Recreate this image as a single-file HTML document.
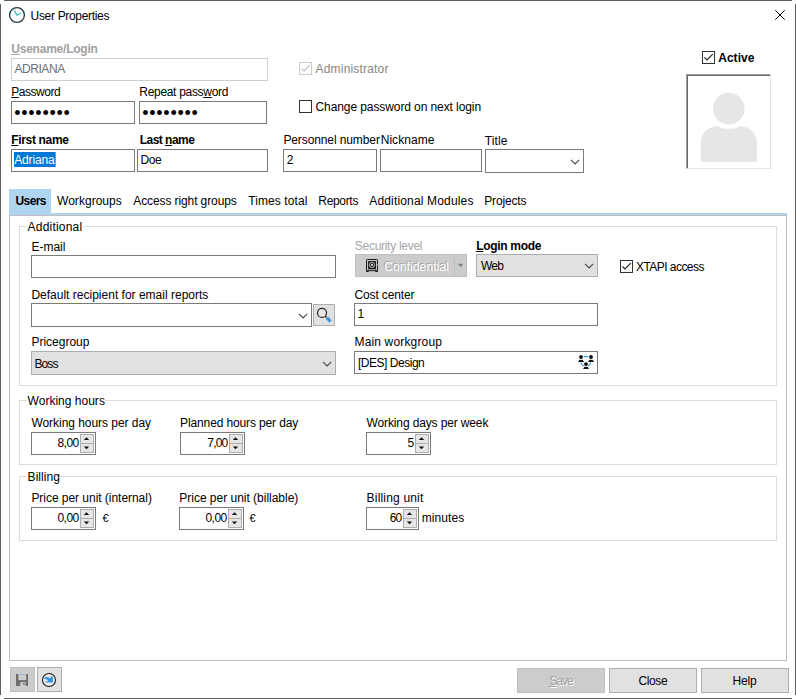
<!DOCTYPE html>
<html lang="en">
<head>
<meta charset="utf-8">
<title>User Properties</title>
<style>
html,body{margin:0;padding:0;background:#fff}
body{width:796px;height:699px;overflow:hidden}
#win{position:relative;width:796px;height:699px;background:#fff;overflow:hidden;font-family:"Liberation Sans",sans-serif;font-size:12px;line-height:14px;color:#000}
#win div,#win svg{position:absolute;box-sizing:border-box}
.t{white-space:nowrap;height:14px}
.b{font-weight:bold}
.t u{text-decoration:underline;text-underline-offset:1px;text-decoration-thickness:1px}
.ln{background:#5e5e5e}
.f{border:1px solid #7a7a7a;background:#fff}
.fd{border:1px solid #cfcfcf;background:#fff}
.cb{border:1px solid #e1e1e1;background:#e1e1e1;outline:0}
.btn{border:1px solid #adadad;background:#e1e1e1}
.gb{border:1px solid #dcdcdc}
.lg{background:#fff}
.ck{border:1px solid #333;background:#fff;width:13px;height:13px}
.sp{border:1px solid #adadad;background:#e6e6e6;width:14px}
.pw{font-size:18px;line-height:14px;height:14px;white-space:nowrap;letter-spacing:0.76px}

</style>
</head>
<body>
<div id="win">
<!-- window frame -->
<div class="ln" style="left:4px;top:0;width:788px;height:1px"></div>
<div class="ln" style="left:4px;top:698px;width:788px;height:1px"></div>
<div class="ln" style="left:0;top:4px;width:1px;height:691px"></div>
<div class="ln" style="left:795px;top:4px;width:1px;height:691px"></div>
<!-- title icon -->
<svg style="left:8px;top:6px" width="18" height="18" viewBox="0 0 18 18"><circle cx="9" cy="9" r="7.4" fill="#fff" stroke="#1f3842" stroke-width="1.3"/><path d="M6.4 4.6 L8.9 9.1 L12.3 7.3" fill="none" stroke="#4bbcbc" stroke-width="1.4" stroke-linecap="round" stroke-linejoin="round"/></svg>
<svg style="left:774px;top:9px" width="13" height="13" viewBox="0 0 13 13"><path d="M1.3 1.3 L10.7 10.7 M10.7 1.3 L1.3 10.7" stroke="#000" stroke-width="1" fill="none"/></svg>

<!-- top form -->
<div class="fd" style="left:11px;top:58px;width:257px;height:23px"></div>
<div class="f" style="left:11px;top:101px;width:124px;height:23px"></div>
<div class="f" style="left:139px;top:101px;width:128px;height:23px"></div>
<div class="t pw" style="left:14.2px;top:106px">••••••••</div>
<div class="t pw" style="left:142.2px;top:106px">••••••••</div>
<div class="f" style="left:11px;top:149px;width:124px;height:23px"></div>
<div style="left:14px;top:152px;width:41px;height:15px;background:#0078d7"></div>
<div style="left:55px;top:152px;width:1px;height:15px;background:#f0822c"></div>
<div class="f" style="left:137px;top:149px;width:131px;height:23px"></div>
<div class="f" style="left:283px;top:149px;width:94px;height:23px"></div>
<div class="f" style="left:380px;top:149px;width:102px;height:23px"></div>
<div class="f" style="left:485px;top:149px;width:99px;height:24px"></div>
<svg style="left:570px;top:158px" width="11" height="8" viewBox="0 0 11 8"><path d="M1 1.8 L5.1 5.9 L9.2 1.8" fill="none" stroke="#444" stroke-width="1.1"/></svg>
<!-- checkboxes top -->
<div class="ck" style="left:299px;top:62px;border-color:#cccccc"></div>
<svg style="left:299px;top:62px" width="13" height="13" viewBox="0 0 13 13"><path d="M2.4 6.4 L5 9 L10.8 3.2" fill="none" stroke="#c0c0c0" stroke-width="1.2"/></svg>
<div class="ck" style="left:299px;top:100px"></div>
<div class="ck" style="left:702px;top:51px"></div>
<svg style="left:702px;top:51px" width="13" height="13" viewBox="0 0 13 13"><path d="M2.4 6.4 L5 9 L10.8 3.2" fill="none" stroke="#222" stroke-width="1.2"/></svg>
<!-- photo -->
<div style="left:686px;top:74px;width:85px;height:95px;background:#fff;border-top:1px solid #a0a0a0;border-left:1px solid #a0a0a0;border-right:1px solid #e3e3e3;border-bottom:1px solid #e3e3e3;box-shadow:inset 1px 1px 0 #696969"></div>
<svg style="left:688px;top:76px" width="82" height="92" viewBox="0 0 82 92"><circle cx="40.8" cy="32.6" r="15.8" fill="#e6e6e6"/><path d="M12.8 86 V68 C12.8 55 22 50.2 30 50.2 C34 53.6 47.6 53.6 51.6 50.2 C59.6 50.2 69 55 69 68 V86 Z" fill="#e6e6e6"/></svg>

<!-- tabs -->
<div style="left:9px;top:189px;width:42px;height:26px;background:#b0d5f0"></div>
<div style="left:9px;top:213px;width:778px;height:2px;background:#b0d5f0"></div>
<div style="left:9px;top:215px;width:778px;height:446px;border:1px solid #bfbfbf"></div>

<!-- group Additional -->
<div class="gb" style="left:19px;top:226px;width:758px;height:160px"></div>
<div class="lg" style="left:27px;top:220px;width:56px;height:14px"></div>
<div class="f" style="left:31px;top:255px;width:305px;height:23px"></div>
<div style="left:355px;top:254px;width:112px;height:23px;background:#cccccc;border:1px solid #bfbfbf"></div>
<div style="left:454px;top:255px;width:1px;height:21px;background:#bdbdbd"></div>
<svg style="left:457px;top:263px" width="8" height="5" viewBox="0 0 8 5"><path d="M0.8 0.8 H6.4 L3.6 4.2 Z" fill="#808080"/></svg>
<svg style="left:366px;top:259px" width="12" height="13" viewBox="0 0 12 13"><rect x="0.5" y="0.5" width="11" height="11.2" rx="0.8" fill="#c6c6c6" stroke="#1a1a1a"/><rect x="2.1" y="2.1" width="7.9" height="8.2" fill="#1a1a1a"/><circle cx="6" cy="5.9" r="2.9" fill="#c4c4c4"/><circle cx="6" cy="5.9" r="2.1" fill="#1a1a1a"/><circle cx="6" cy="5.9" r="1.05" fill="#dedede"/><rect x="0" y="11.5" width="2.7" height="1.4" fill="#1a1a1a"/><rect x="9.3" y="11.5" width="2.7" height="1.4" fill="#1a1a1a"/><rect x="10.6" y="5" width="0.9" height="1.9" fill="#c6c6c6"/></svg>
<div class="btn" style="left:476px;top:254px;width:122px;height:23px"></div>
<svg style="left:584px;top:262px" width="11" height="8" viewBox="0 0 11 8"><path d="M1 1.8 L5.1 5.9 L9.2 1.8" fill="none" stroke="#444" stroke-width="1.1"/></svg>
<div class="ck" style="left:620px;top:260px"></div>
<svg style="left:620px;top:260px" width="13" height="13" viewBox="0 0 13 13"><path d="M2.4 6.4 L5 9 L10.8 3.2" fill="none" stroke="#222" stroke-width="1.2"/></svg>

<div class="f" style="left:31px;top:303px;width:281px;height:24px"></div>
<svg style="left:298px;top:311.6px" width="11" height="8" viewBox="0 0 11 8"><path d="M1 1.8 L5.1 5.9 L9.2 1.8" fill="none" stroke="#444" stroke-width="1.1"/></svg>
<div class="btn" style="left:313px;top:304px;width:22px;height:22px"></div>
<svg style="left:313px;top:304px" width="22" height="22" viewBox="0 0 22 22"><circle cx="9" cy="8.9" r="4.5" fill="#e6e6e6" stroke="#222" stroke-width="1.2"/><path d="M12.3 12.2 L13.6 13.5" stroke="#222" stroke-width="1.4"/><path d="M14 13.9 L17.6 17.5" stroke="#3a96d8" stroke-width="3.2" stroke-linecap="butt"/></svg>
<div class="f" style="left:354px;top:303px;width:244px;height:23px"></div>

<div class="btn" style="left:31px;top:351px;width:305px;height:24px"></div>
<svg style="left:322px;top:360px" width="11" height="8" viewBox="0 0 11 8"><path d="M1 1.8 L5.1 5.9 L9.2 1.8" fill="none" stroke="#444" stroke-width="1.1"/></svg>
<div class="f" style="left:354px;top:351px;width:244px;height:23px"></div>
<svg style="left:576px;top:354px" width="20" height="17" viewBox="0 0 20 17"><g fill="none" stroke="#3a9ede" stroke-width="1.1"><path d="M7.7 3 A5 5 0 0 1 12.3 3"/><path d="M5.08 8.6 A5 5 0 0 0 7.9 12.03"/><path d="M14.92 8.6 A5 5 0 0 1 12.1 12.03"/></g><g fill="#111"><circle cx="5.05" cy="3" r="1.95"/><path d="M1.9 7.9 L3.5 5.7 H6.6 L8.1 7.9 Z"/><circle cx="15" cy="3" r="1.95"/><path d="M11.9 7.9 L13.4 5.7 H16.5 L18.1 7.9 Z"/><circle cx="10" cy="10.1" r="1.95"/><path d="M7 15.1 L8.5 12.8 H11.5 L13 15.1 Z"/></g><g fill="#e8e8e8"><rect x="3.7" y="5.1" width="2.7" height="0.6"/><rect x="13.6" y="5.1" width="2.7" height="0.6"/><rect x="8.6" y="12.2" width="2.7" height="0.6"/></g></svg>

<!-- group Working hours -->
<div class="gb" style="left:19px;top:400px;width:758px;height:65px"></div>
<div class="lg" style="left:27px;top:394px;width:78px;height:14px"></div>
<!-- group Billing -->
<div class="gb" style="left:19px;top:476px;width:758px;height:65px"></div>
<div class="lg" style="left:27px;top:470px;width:33px;height:14px"></div>

<div class="f" style="left:31px;top:432px;width:65px;height:23px"></div>
<div class="sp" style="left:80px;top:434px;height:10px"></div>
<div class="sp" style="left:80px;top:443px;height:10px"></div>
<svg style="left:83px;top:437px" width="7" height="4" viewBox="0 0 7 4"><path d="M0.8 3.1 L3.5 0.3 L6.2 3.1 Z" fill="#111"/></svg>
<svg style="left:83px;top:446px" width="7" height="4" viewBox="0 0 7 4"><path d="M0.8 0.5 L3.5 3.3 L6.2 0.5 Z" fill="#111"/></svg>
<div class="f" style="left:180px;top:432px;width:65px;height:23px"></div>
<div class="sp" style="left:229px;top:434px;height:10px"></div>
<div class="sp" style="left:229px;top:443px;height:10px"></div>
<svg style="left:232px;top:437px" width="7" height="4" viewBox="0 0 7 4"><path d="M0.8 3.1 L3.5 0.3 L6.2 3.1 Z" fill="#111"/></svg>
<svg style="left:232px;top:446px" width="7" height="4" viewBox="0 0 7 4"><path d="M0.8 0.5 L3.5 3.3 L6.2 0.5 Z" fill="#111"/></svg>
<div class="f" style="left:366px;top:432px;width:65px;height:23px"></div>
<div class="sp" style="left:415px;top:434px;height:10px"></div>
<div class="sp" style="left:415px;top:443px;height:10px"></div>
<svg style="left:418px;top:437px" width="7" height="4" viewBox="0 0 7 4"><path d="M0.8 3.1 L3.5 0.3 L6.2 3.1 Z" fill="#111"/></svg>
<svg style="left:418px;top:446px" width="7" height="4" viewBox="0 0 7 4"><path d="M0.8 0.5 L3.5 3.3 L6.2 0.5 Z" fill="#111"/></svg>
<div class="f" style="left:31px;top:507px;width:65px;height:23px"></div>
<div class="sp" style="left:80px;top:509px;height:10px"></div>
<div class="sp" style="left:80px;top:518px;height:10px"></div>
<svg style="left:83px;top:512px" width="7" height="4" viewBox="0 0 7 4"><path d="M0.8 3.1 L3.5 0.3 L6.2 3.1 Z" fill="#111"/></svg>
<svg style="left:83px;top:521px" width="7" height="4" viewBox="0 0 7 4"><path d="M0.8 0.5 L3.5 3.3 L6.2 0.5 Z" fill="#111"/></svg>
<div class="f" style="left:179px;top:507px;width:65px;height:23px"></div>
<div class="sp" style="left:228px;top:509px;height:10px"></div>
<div class="sp" style="left:228px;top:518px;height:10px"></div>
<svg style="left:231px;top:512px" width="7" height="4" viewBox="0 0 7 4"><path d="M0.8 3.1 L3.5 0.3 L6.2 3.1 Z" fill="#111"/></svg>
<svg style="left:231px;top:521px" width="7" height="4" viewBox="0 0 7 4"><path d="M0.8 0.5 L3.5 3.3 L6.2 0.5 Z" fill="#111"/></svg>
<div class="f" style="left:366px;top:507px;width:53px;height:23px"></div>
<div class="sp" style="left:403px;top:509px;height:10px"></div>
<div class="sp" style="left:403px;top:518px;height:10px"></div>
<svg style="left:406px;top:512px" width="7" height="4" viewBox="0 0 7 4"><path d="M0.8 3.1 L3.5 0.3 L6.2 3.1 Z" fill="#111"/></svg>
<svg style="left:406px;top:521px" width="7" height="4" viewBox="0 0 7 4"><path d="M0.8 0.5 L3.5 3.3 L6.2 0.5 Z" fill="#111"/></svg>

<!-- bottom buttons -->
<div style="left:10px;top:667px;width:25px;height:25px;background:#cccccc;border:1px solid #bfbfbf"></div>
<svg style="left:16px;top:674px" width="12" height="12" viewBox="0 0 12 12"><rect x="0" y="0" width="12" height="12" fill="#6d6d6d"/><rect x="2.4" y="0" width="7.8" height="6.1" fill="#cfcfcf"/><rect x="2.8" y="0" width="7" height="0.9" fill="#86bce6"/><rect x="4.2" y="8.2" width="5.5" height="3.8" fill="#cccccc"/><rect x="7.2" y="9.1" width="1.5" height="1.9" fill="#6d6d6d"/></svg>
<div class="btn" style="left:37px;top:667px;width:25px;height:25px"></div>
<svg style="left:41px;top:672px" width="16" height="16" viewBox="0 0 16 16"><circle cx="8" cy="8" r="6.5" fill="#ebebeb" stroke="#1c1c1c" stroke-width="1.1"/><path d="M3.2 5.7 C5 4.5 7.2 4.7 8.9 6.4 L10.4 4.1 L11.9 5.3 L11.9 10.6 L4.9 10.6 L4.4 9.6 L7.3 8.9 C6.4 7.6 5 7 3.2 7.1 Z" fill="#2f96e0"/></svg>
<div style="left:517px;top:668px;width:88px;height:25px;background:#cccccc;border:1px solid #bfbfbf"></div>
<div class="btn" style="left:609px;top:668px;width:88px;height:25px"></div>
<div class="btn" style="left:701px;top:668px;width:88px;height:25px"></div>

<!-- text layer -->
<div class="t" style="top:9px;left:30.6px;letter-spacing:-0.327px;">User Properties</div>
<div class="t b" style="top:42px;left:11.3px;letter-spacing:-0.230px;color:#a0a0a0;"><u>U</u>sename/Login</div>
<div class="t" style="top:62px;left:14.4px;letter-spacing:-0.424px;color:#6e6e6e;">ADRIANA</div>
<div class="t" style="top:85px;left:11.3px;letter-spacing:-0.472px;"><u>P</u>assword</div>
<div class="t" style="top:85px;left:139.3px;letter-spacing:-0.308px;">Repeat pass<u>w</u>ord</div>
<div class="t b" style="top:133px;left:11.3px;letter-spacing:-0.345px;"><u>F</u>irst name</div>
<div class="t b" style="top:133px;left:139.7px;letter-spacing:-0.524px;">Last <u>n</u>ame</div>
<div class="t" style="top:153px;left:14.3px;letter-spacing:-0.179px;color:#fff;">Adriana</div>
<div class="t" style="top:153px;left:140.5px;letter-spacing:-0.458px;">Doe</div>
<div class="t" style="top:133px;left:283.4px;letter-spacing:-0.104px;">Personnel number</div>
<div class="t" style="top:133px;left:380.7px;letter-spacing:0.049px;">Nickname</div>
<div class="t" style="top:153px;left:286.7px;">2</div>
<div class="t" style="top:134px;left:484.7px;letter-spacing:0.116px;">Title</div>
<div class="t" style="top:62px;left:315.6px;letter-spacing:0.176px;color:#858585;">Administrator</div>
<div class="t" style="top:100px;left:315.5px;letter-spacing:-0.090px;">Change password on next login</div>
<div class="t b" style="top:51px;left:718.2px;letter-spacing:0.034px;">Active</div>
<div class="t b" style="top:194px;left:15.6px;letter-spacing:-0.640px;">Users</div>
<div class="t" style="top:194px;left:57px;letter-spacing:0.035px;">Workgroups</div>
<div class="t" style="top:194px;left:133.3px;letter-spacing:-0.105px;">Access right groups</div>
<div class="t" style="top:194px;left:248.3px;letter-spacing:0.085px;">Times total</div>
<div class="t" style="top:194px;left:318.3px;letter-spacing:-0.322px;">Reports</div>
<div class="t" style="top:194px;left:369.3px;letter-spacing:0.158px;">Additional Modules</div>
<div class="t" style="top:194px;left:484.3px;letter-spacing:-0.180px;">Projects</div>
<div class="t" style="top:220px;left:27.6px;letter-spacing:0.198px;">Additional</div>
<div class="t" style="top:240px;left:31.4px;">E-mail</div>
<div class="t" style="top:239px;left:354.8px;letter-spacing:-0.283px;color:#a6a6a6;">Security level</div>
<div class="t b" style="top:239px;left:476.2px;letter-spacing:-0.313px;"><u>L</u>ogin mode</div>
<div class="t" style="top:259px;left:383.2px;letter-spacing:0.120px;color:#a4a4a4;">Confidential</div>
<div class="t" style="top:260px;left:384.2px;letter-spacing:0.120px;color:#fff;">Confidential</div>
<div class="t" style="top:259px;left:481px;letter-spacing:-0.784px;">Web</div>
<div class="t" style="top:260px;left:636px;letter-spacing:-0.552px;">XTAPI access</div>
<div class="t" style="top:288px;left:31.4px;letter-spacing:0.007px;">Default recipient for email reports</div>
<div class="t" style="top:288px;left:354.5px;letter-spacing:-0.146px;">Cost center</div>
<div class="t" style="top:307px;left:357.6px;">1</div>
<div class="t" style="top:335px;left:31.4px;">Pricegroup</div>
<div class="t" style="top:357px;left:34.5px;letter-spacing:-0.929px;">Boss</div>
<div class="t" style="top:335px;left:354.5px;letter-spacing:0.156px;">Main workgroup</div>
<div class="t" style="top:356px;left:358px;letter-spacing:-0.476px;">[DES] Design</div>
<div class="t" style="top:394px;left:27.6px;letter-spacing:0.012px;">Working hours</div>
<div class="t" style="top:416px;left:31.4px;letter-spacing:-0.041px;">Working hours per day</div>
<div class="t" style="top:436px;right:717.35px;letter-spacing:-0.553px;">8,00</div>
<div class="t" style="top:416px;left:180.1px;letter-spacing:-0.128px;">Planned hours per day</div>
<div class="t" style="top:436px;right:568.62px;letter-spacing:-0.820px;">7,00</div>
<div class="t" style="top:416px;left:366.6px;letter-spacing:-0.135px;">Working days per week</div>
<div class="t" style="top:436px;right:381.80px;">5</div>
<div class="t" style="top:470px;left:27.6px;letter-spacing:0.047px;">Billing</div>
<div class="t" style="top:491px;left:31.4px;letter-spacing:-0.037px;">Price per unit (internal)</div>
<div class="t" style="top:511px;right:717.35px;letter-spacing:-0.553px;">0,00</div>
<div class="t" style="top:511px;left:102.6px;font-size:11px;">€</div>
<div class="t" style="top:491px;left:179.3px;letter-spacing:-0.016px;">Price per unit (billable)</div>
<div class="t" style="top:511px;right:569.35px;letter-spacing:-0.553px;">0,00</div>
<div class="t" style="top:511px;left:249.6px;font-size:11px;">€</div>
<div class="t" style="top:491px;left:366.6px;letter-spacing:0.182px;">Billing unit</div>
<div class="t" style="top:511px;right:394.76px;letter-spacing:-0.959px;">60</div>
<div class="t" style="top:511px;left:421.7px;letter-spacing:0.095px;">minutes</div>
<div class="t" style="top:675px;left:550.4px;letter-spacing:-1.025px;color:#fff;"><u>S</u>ave</div>
<div class="t" style="top:674px;left:549.4px;letter-spacing:-1.025px;color:#a0a0a0;"><u>S</u>ave</div>
<div class="t" style="top:674px;left:638.6px;letter-spacing:-0.422px;">Close</div>
<div class="t" style="top:674px;left:732.6px;letter-spacing:-0.229px;">Help</div>
</div>
</body>
</html>
